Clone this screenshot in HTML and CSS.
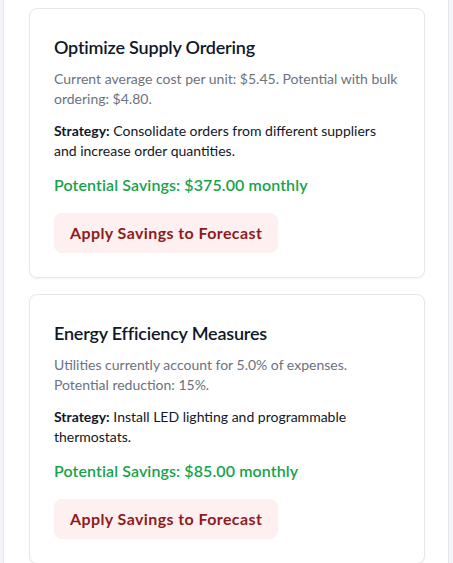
FILE: index.html
```html
<!DOCTYPE html>
<html>
<head>
<meta charset="utf-8">
<link rel="stylesheet" href="styles.css">
</head>
<body>
<div class="panel">
  <div class="card">
    <h3 class="title">Optimize Supply Ordering</h3>
    <p class="desc">Current average cost per unit: $5.45. Potential with bulk ordering: $4.80.</p>
    <p class="strategy"><strong>Strategy:</strong> Consolidate orders from different suppliers and increase order quantities.</p>
    <p class="savings">Potential Savings: $375.00 monthly</p>
    <button class="apply">Apply Savings to Forecast</button>
  </div>
  <div class="card">
    <h3 class="title">Energy Efficiency Measures</h3>
    <p class="desc">Utilities currently account for 5.0% of expenses. Potential reduction: 15%.</p>
    <p class="strategy"><strong>Strategy:</strong> Install LED lighting and programmable thermostats.</p>
    <p class="savings">Potential Savings: $85.00 monthly</p>
    <button class="apply">Apply Savings to Forecast</button>
  </div>
</div>
</body>
</html>
```
FILE: styles.css
```css
html, body {
  margin: 0;
  padding: 0;
}
body {
  background: #f3f5f8;
  font-family: Lato, "Noto Sans", sans-serif;
  height: 563px;
  overflow: hidden;
}
.panel {
  margin-left: 3px;
  width: 396px;
  min-height: 563px;
  background: #ffffff;
  border-left: 1px solid #e5e7eb;
  border-right: 1px solid #e5e7eb;
  padding: 8px 23px 0 25px;
  display: flex;
  flex-direction: column;
  gap: 16px;
}
.card {
  border: 1px solid #e5e7eb;
  border-radius: 8px;
  padding: 24px;
  background: #fff;
  box-shadow: 0 1px 2px rgba(0,0,0,0.05);
  display: flex;
  flex-direction: column;
  align-items: flex-start;
}
.title {
  margin: 0 0 8px;
  font-size: 18px;
  line-height: 28px;
  font-weight: 600;
  color: #111827;
  letter-spacing: -0.2px;
}
.desc {
  margin: 0 0 12px;
  font-size: 14px;
  line-height: 20px;
  color: #6b7280;
}
.strategy {
  margin: 0 0 12px;
  font-size: 14px;
  line-height: 20px;
  color: #111827;
}
.strategy strong {
  font-weight: 700;
}
.savings {
  margin: 0 0 16px;
  font-size: 16px;
  line-height: 24px;
  font-weight: 600;
  color: #16a34a;
  letter-spacing: 0.1px;
}
.apply {
  font-family: inherit;
  border: none;
  border-radius: 8px;
  background: #fef0f0;
  color: #8f1c1c;
  font-size: 16px;
  line-height: 24px;
  font-weight: 700;
  letter-spacing: 0.4px;
  padding: 8px 16px;
  cursor: pointer;
}
```
